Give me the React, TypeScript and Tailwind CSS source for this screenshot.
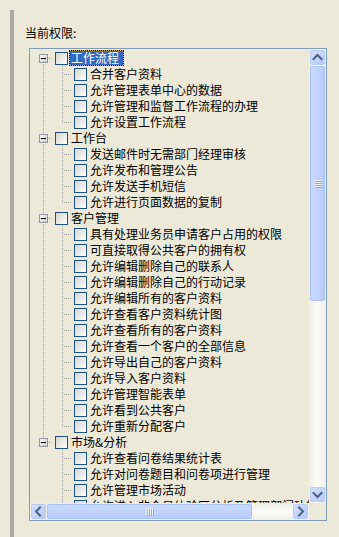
import React from 'react';

type Group = { label: string; children: string[] };

const groups: Group[] = [
  {
    label: '工作流程',
    children: ['合并客户资料', '允许管理表单中心的数据', '允许管理和监督工作流程的办理', '允许设置工作流程'],
  },
  {
    label: '工作台',
    children: ['发送邮件时无需部门经理审核', '允许发布和管理公告', '允许发送手机短信', '允许进行页面数据的复制'],
  },
  {
    label: '客户管理',
    children: [
      '具有处理业务员申请客户占用的权限',
      '可直接取得公共客户的拥有权',
      '允许编辑删除自己的联系人',
      '允许编辑删除自己的行动记录',
      '允许编辑所有的客户资料',
      '允许查看客户资料统计图',
      '允许查看所有的客户资料',
      '允许查看一个客户的全部信息',
      '允许导出自己的客户资料',
      '允许导入客户资料',
      '允许管理智能表单',
      '允许看到公共客户',
      '允许重新分配客户',
    ],
  },
  {
    label: '市场&分析',
    children: ['允许查看问卷结果统计表', '允许对问卷题目和问卷项进行管理', '允许管理市场活动', '允许进入非会员体验区分析及管理部门功能，同时'],
  },
];

const DOT = '#a0a0a0';

function DotLine(props: { x1: number; y1: number; x2: number; y2: number }) {
  return <line {...props} stroke={DOT} strokeWidth={1} strokeDasharray="1 1" shapeRendering="crispEdges" />;
}

// one 19px indent column of the tree lines
function RootCell({ first, last }: { first: boolean; last: boolean }) {
  return (
    <svg width="19" height="16" className="block shrink-0">
      <defs>
        <linearGradient id="pm" x1="0" y1="0" x2="1" y2="1">
          <stop offset="0" stopColor="#ffffff" />
          <stop offset="1" stopColor="#c9c5b8" />
        </linearGradient>
      </defs>
      {!first && <DotLine x1={9.5} y1={0} x2={9.5} y2={4} />}
      {!last && <DotLine x1={9.5} y1={14} x2={9.5} y2={16} />}
      <DotLine x1={15} y1={8.5} x2={19} y2={8.5} />
      <rect x={5.5} y={4.5} width={8} height={8} fill="url(#pm)" stroke="#8d9aa6" shapeRendering="crispEdges" />
      <line x1={7} y1={8.5} x2={12} y2={8.5} stroke="#000" shapeRendering="crispEdges" />
    </svg>
  );
}

function LineCell({ full }: { full: boolean }) {
  return (
    <svg width="19" height="16" className="block shrink-0">
      {full && <DotLine x1={9.5} y1={0} x2={9.5} y2={16} />}
    </svg>
  );
}

function BranchCell({ last }: { last: boolean }) {
  return (
    <svg width="19" height="16" className="block shrink-0">
      <DotLine x1={9.5} y1={0} x2={9.5} y2={last ? 9 : 16} />
      <DotLine x1={11} y1={8.5} x2={19} y2={8.5} />
    </svg>
  );
}

function Check() {
  return (
    <span className="ml-[2px] mt-[2px] self-start w-[13px] h-[13px] shrink-0 border border-[#1c5180] bg-linear-to-br from-[#d6d5cc] to-white" />
  );
}

function ArrowBtn({ dir }: { dir: 'up' | 'down' | 'left' | 'right' }) {
  const pts = {
    up: '4.5,10 8.5,6 12.5,10',
    down: '4.5,7 8.5,11 12.5,7',
    left: '10,4.5 6,8.5 10,12.5',
    right: '7,4.5 11,8.5 7,12.5',
  }[dir];
  return (
    <div className="w-[17px] h-[17px] p-[1px] shrink-0">
      <div className="w-full h-full rounded-[2px] border border-[#b7cbf7] bg-linear-to-br from-[#d4e1fe] to-[#b4c9fa]">
        <svg width="15" height="15" viewBox="1 1 15 15" className="block -m-px">
          <polyline points={pts} fill="none" stroke="#4d6185" strokeWidth={2} strokeLinecap="square" />
        </svg>
      </div>
    </div>
  );
}

function VGrip() {
  return (
    <svg width="8" height="8" className="block">
      {[0, 2, 4, 6].map((y) => (
        <g key={y}>
          <line x1={0} y1={y + 0.5} x2={7} y2={y + 0.5} stroke="#eef4fe" />
          <line x1={1} y1={y + 1.5} x2={8} y2={y + 1.5} stroke="#8cabf0" />
        </g>
      ))}
    </svg>
  );
}

function HGrip() {
  return (
    <svg width="8" height="8" className="block">
      {[0, 2, 4, 6].map((x) => (
        <g key={x}>
          <line x1={x + 0.5} y1={0} x2={x + 0.5} y2={7} stroke="#eef4fe" />
          <line x1={x + 1.5} y1={1} x2={x + 1.5} y2={8} stroke="#8cabf0" />
        </g>
      ))}
    </svg>
  );
}

export default function App() {
  return (
    <div className="flex w-[339px] h-[537px] overflow-hidden bg-[#ece9d8] text-[12px] text-black font-['Noto_Sans_CJK_SC','Noto_Sans',sans-serif]">
      <div className="w-[10px] shrink-0" />
      <div className="w-[4px] shrink-0 mt-[10px] bg-[#aaa9a5]" />
      <div className="flex flex-col pl-[11px] pt-[25px]">
        <div className="h-4 leading-4">当前权限:</div>

        <div className="mt-[7px] ml-[4px] w-[298px] h-[473px] border border-[#7f9db9] flex flex-col">
          <div className="flex h-[454px]">
            {/* tree content */}
            <div className="w-[279px] overflow-hidden pt-[1px]">
              {groups.map((g, gi) => {
                const lastRoot = gi === groups.length - 1;
                return (
                  <div key={g.label}>
                    <div className="flex h-4">
                      <div className="w-[4px] shrink-0" />
                      <RootCell first={gi === 0} last={lastRoot} />
                      <Check />
                      {gi === 0 ? (
                        <span className="ml-[1px] h-4 border border-dotted border-black bg-[#dcae3c] shrink-0">
                          <span className="block h-[14px] leading-[14px] bg-[#316ac5] text-white pl-[1px] pr-[4px]">{g.label}</span>
                        </span>
                      ) : (
                        <span className="ml-[1px] px-[2px] leading-4 whitespace-nowrap">{g.label}</span>
                      )}
                    </div>
                    {g.children.map((c, ci) => (
                      <div key={c} className="flex h-4">
                        <div className="w-[4px] shrink-0" />
                        <LineCell full={!lastRoot} />
                        <BranchCell last={ci === g.children.length - 1} />
                        <Check />
                        <span className="ml-[1px] px-[2px] leading-4 whitespace-nowrap">{c}</span>
                      </div>
                    ))}
                  </div>
                );
              })}
            </div>

            {/* vertical scrollbar */}
            <div className="w-[17px] flex flex-col bg-linear-to-r from-[#eeede5] via-[#fbfbf8] to-[#f0efe8]">
              <ArrowBtn dir="up" />
              <div className="h-[235px] px-[1px] shrink-0">
                <div className="h-full rounded-[2px] border border-[#a9c1f5] bg-linear-to-r from-[#cadafd] via-[#c2d4fc] to-[#b6cbfa] flex items-center justify-center">
                  <VGrip />
                </div>
              </div>
              <div className="flex-1" />
              <ArrowBtn dir="down" />
            </div>
          </div>

          <div className="flex h-[17px]">
            {/* horizontal scrollbar */}
            <div className="w-[279px] flex bg-linear-to-b from-[#eeede5] via-[#fbfbf8] to-[#f0efe8]">
              <ArrowBtn dir="left" />
              <div className="w-[205px] py-[1px] shrink-0">
                <div className="h-full rounded-[2px] border border-[#a9c1f5] bg-linear-to-b from-[#cadafd] via-[#c2d4fc] to-[#b6cbfa] flex items-center justify-center">
                  <HGrip />
                </div>
              </div>
              <div className="flex-1" />
              <ArrowBtn dir="right" />
            </div>
            <div className="w-[17px] bg-[#ece9d8]" />
          </div>
        </div>
      </div>
    </div>
  );
}
